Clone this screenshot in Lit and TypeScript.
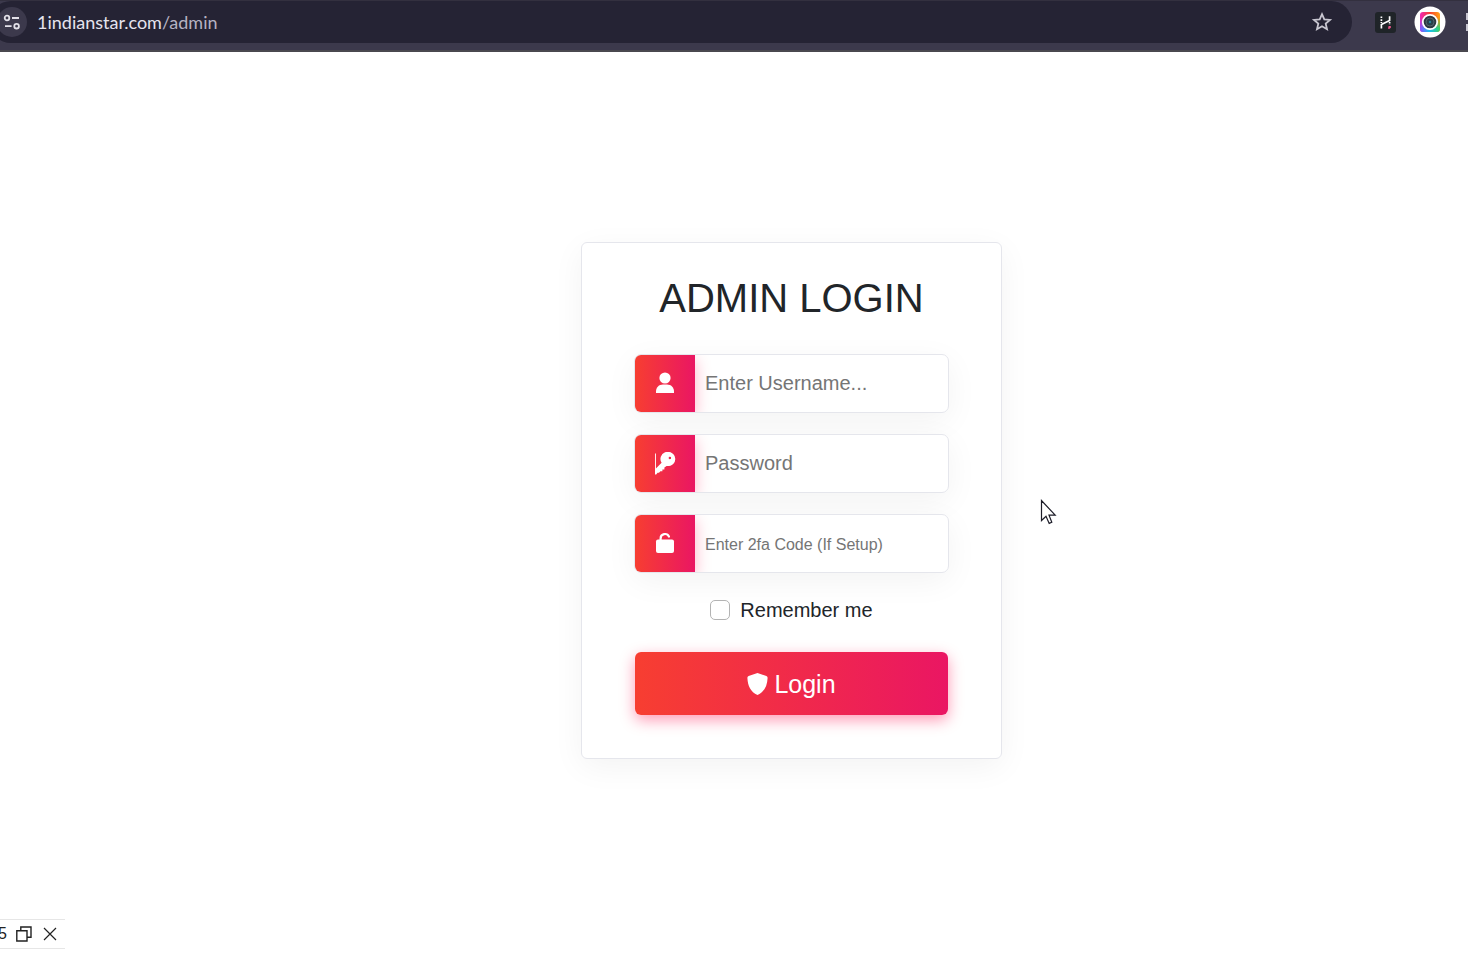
import { LitElement, html, css, svg, TemplateResult } from "lit";
import { customElement, property } from "lit/decorators.js";

const personIcon = svg`
  <circle cx="12" cy="6" r="5.6"></circle>
  <path d="M3 21V19.4C3 15.2 6 12.4 10 12.4H14C18 12.4 21 15.2 21 19.4V21Z"></path>`;

const keyIcon = svg`
  <path d="M2 1.5H2.9V16.6L8.6 10.8A7 7 0 1 1 13.6 13.9L11.4 15.6V17.4H9.4V19.2H7.4L6 20.8H4.6L3.2 22.6H2Z M16.8 4.6A1.4 1.4 0 1 0 16.8 7.4A1.4 1.4 0 1 0 16.8 4.6Z" fill-rule="evenodd"></path>
  <path d="M8.3 7A7 7 0 0 1 22.3 7A7 7 0 0 1 15.3 14L10 13Z M16.8 4.6A1.4 1.4 0 1 0 16.8 7.4A1.4 1.4 0 1 0 16.8 4.6Z" fill-rule="evenodd"></path>`;

const unlockIcon = svg`
  <path d="M7.6 9V6.4A4.4 4.4 0 0 1 16 4.6" fill="none" stroke="currentColor" stroke-width="2.2" stroke-linecap="round"></path>
  <rect x="3" y="7.6" width="18" height="13.4" rx="2"></rect>`;

@customElement("browser-bar")
export class BrowserBar extends LitElement {
  static styles = css`
    :host {
      display: block;
      font-family: Lato, "Open Sans", sans-serif;
    }
    .bar {
      display: flex;
      align-items: center;
      height: 52px;
      box-sizing: border-box;
      padding-bottom: 7px;
      background: #3c394c;
      border-top: 1px solid #33303f;
      border-bottom: 2px solid #4a484f;
      overflow: hidden;
    }
    .address {
      display: flex;
      align-items: center;
      flex: 1;
      height: 42px;
      margin-left: -10px;
      padding-left: 7px;
      padding-right: 18px;
      border-radius: 21px;
      background: #252334;
    }
    button {
      display: flex;
      flex: none;
      align-items: center;
      justify-content: center;
      padding: 0;
      border: 0;
      background: none;
      color: #c8c6d0;
    }
    .site {
      width: 30px;
      height: 30px;
      border-radius: 50%;
      background: #3c394c;
      color: #e3e1e9;
    }
    .url {
      flex: 1;
      margin-left: 10px;
      font-size: 18px;
      line-height: 24px;
      color: #e6e4ee;
      text-decoration: none;
    }
    .path {
      color: #b5b2c2;
    }
    .tools {
      display: flex;
      flex: none;
      align-items: center;
      width: 116px;
      padding-left: 23px;
      box-sizing: border-box;
      gap: 18px;
    }
    svg {
      display: block;
      flex: none;
    }
  `;

  render() {
    return html`
      <header class="bar">
        <div class="address">
          <button class="site" aria-label="Site information">
            <svg width="18" height="16" viewBox="0 0 18 16" fill="none" stroke="currentColor" stroke-width="1.8">
              <circle cx="4" cy="4" r="2.3"></circle>
              <path d="M9 4H16M2 12.2H8.6"></path>
              <circle cx="13.6" cy="12.2" r="2.3"></circle>
            </svg>
          </button>
          <a class="url" href="#">1indianstar.com<span class="path">/admin</span></a>
          <button aria-label="Bookmark this page">
            <svg width="24" height="24" viewBox="0 0 24 24" fill="none" stroke="currentColor" stroke-width="1.8">
              <path d="M12 4.2L14.3 9.4L20 9.9L15.7 13.6L17 19.2L12 16.2L7 19.2L8.3 13.6L4 9.9L9.7 9.4Z"></path>
            </svg>
          </button>
        </div>
        <div class="tools">
          <button aria-label="Extension">
            <svg width="21" height="21" viewBox="0 0 21 21">
              <rect width="21" height="21" rx="3" fill="#1f2428"></rect>
              <g fill="none" stroke="#fff" stroke-width="1.7">
                <path d="M6.4 16.5V12.5L14.6 8.5V4.2"></path>
                <path d="M6.4 4.5V11" stroke-dasharray="1.6 1.2"></path>
                <path d="M14.6 10V13" stroke-dasharray="1.6 1.2"></path>
              </g>
              <path d="M13.6 14H15.8V15.4L14.8 16.8H13Z" fill="#f0568c"></path>
            </svg>
          </button>
          <button aria-label="Camera extension">
            <svg width="32" height="32" viewBox="0 0 32 32">
              <defs>
                <linearGradient id="top" x1="0" x2="1">
                  <stop offset="0" stop-color="#f026b8"></stop>
                  <stop offset="0.5" stop-color="#f8402e"></stop>
                  <stop offset="1" stop-color="#ffa316"></stop>
                </linearGradient>
                <linearGradient id="bottom" x1="0" x2="1">
                  <stop offset="0" stop-color="#8d4dff"></stop>
                  <stop offset="0.45" stop-color="#18bdf2"></stop>
                  <stop offset="1" stop-color="#38d46a"></stop>
                </linearGradient>
                <linearGradient id="fade" x2="0" y2="1">
                  <stop offset="0.3" stop-color="#000"></stop>
                  <stop offset="0.8" stop-color="#fff"></stop>
                </linearGradient>
                <mask id="lower"><rect x="5" y="5" width="22" height="22" fill="url(#fade)"></rect></mask>
              </defs>
              <circle cx="16" cy="16" r="15.5" fill="#fff"></circle>
              <rect x="6" y="6" width="20" height="20" rx="3" fill="url(#top)"></rect>
              <rect x="6" y="6" width="20" height="20" rx="3" fill="url(#bottom)" mask="url(#lower)"></rect>
              <circle cx="16" cy="16" r="7.2" fill="#2d3942" stroke="#fff" stroke-width="1.8"></circle>
              <circle cx="16" cy="16" r="4" fill="#29404b" stroke="#54636c" stroke-width="1"></circle>
              <circle cx="16" cy="16" r="1.2" fill="#2c8095"></circle>
            </svg>
          </button>
          <button aria-label="Extensions">
            <svg width="20" height="20" viewBox="0 0 20 20" fill="none" stroke="currentColor" stroke-width="2">
              <path d="M3 8V2H8M3 12V18H8M12 2H18V8M18 12V18H12"></path>
            </svg>
          </button>
        </div>
      </header>
    `;
  }
}

@customElement("icon-field")
export class IconField extends LitElement {
  @property() label = "";
  @property() type = "text";
  @property({ type: Boolean, reflect: true }) small = false;
  @property({ attribute: false }) icon?: TemplateResult;

  static styles = css`
    :host {
      display: block;
    }
    .field {
      display: flex;
      height: 57px;
      border: 1px solid #e5e6ec;
      border-radius: 7px;
      overflow: hidden;
      background: #fff;
    }
    .wrap {
      border-radius: 7px;
      box-shadow: 0 8px 32px rgba(0, 0, 0, 0.05);
    }
    .badge {
      display: flex;
      flex: none;
      align-items: center;
      justify-content: center;
      width: 60px;
      color: #fff;
      background: linear-gradient(to right, #f73e31, #ea1663);
      box-shadow: 0 5px 15px rgba(255, 0, 70, 0.3);
    }
    svg {
      display: block;
      fill: currentColor;
    }
    input {
      flex: 1;
      min-width: 0;
      padding: 0 10px;
      border: 0;
      outline: 0;
      background: none;
      font-family: "Liberation Sans", Arial, sans-serif;
      font-size: 20px;
      color: #212529;
    }
    input::placeholder {
      color: #757575;
      opacity: 1;
    }
    :host([small]) input {
      padding-top: 2px;
      font-size: 16px;
    }
  `;

  render() {
    return html`
      <div class="wrap">
        <div class="field">
          <label class="badge" for="control" aria-label=${this.label}>
            <svg width="24" height="24" viewBox="0 0 24 24">${this.icon}</svg>
          </label>
          <input id="control" type=${this.type} placeholder=${this.label} />
        </div>
      </div>
    `;
  }
}

@customElement("app-root")
export class AppRoot extends LitElement {
  static styles = css`
    :host {
      display: flex;
      flex-direction: column;
      position: relative;
      min-height: 100vh;
      background: #fff;
      font-family: "Liberation Sans", Arial, sans-serif;
      color: #212529;
    }
    main {
      display: flex;
      flex: 1;
      align-items: center;
      justify-content: center;
      padding: 0 0 20px 115px;
    }
    .card {
      display: flex;
      flex-direction: column;
      box-sizing: border-box;
      width: 100%;
      max-width: 421px;
      padding: 31px 52px 43px;
      border: 1px solid #e5e6ec;
      border-radius: 6px;
      box-shadow: 0 8px 32px rgba(0, 0, 0, 0.05);
    }
    h1 {
      margin: 0 0 32px;
      font-size: 40px;
      line-height: 48px;
      font-weight: 400;
      text-align: center;
    }
    .fields {
      display: grid;
      grid-template-columns: minmax(0, 1fr);
      gap: 21px;
    }
    .remember {
      display: flex;
      align-items: center;
      justify-content: center;
      gap: 10px;
      margin: 22px 0 27px;
      font-size: 20px;
      line-height: 30px;
    }
    .remember input {
      appearance: none;
      box-sizing: border-box;
      width: 20px;
      height: 20px;
      margin: 0;
      border: 1px solid #b3b3b3;
      border-radius: 5px;
      background: #fff;
    }
    .login {
      display: flex;
      align-items: center;
      justify-content: center;
      gap: 6px;
      height: 63px;
      margin: 0 1px;
      padding: 0;
      border: 0;
      border-radius: 6px;
      background: linear-gradient(to right, #f73e31, #ea1663);
      box-shadow: 0 5px 15px rgba(255, 0, 70, 0.4);
      color: #fff;
      font-family: inherit;
      font-size: 25px;
      line-height: 38px;
    }
    .controls {
      position: absolute;
      left: 0;
      bottom: 20px;
      display: flex;
      align-items: center;
      box-sizing: border-box;
      width: 65px;
      height: 30px;
      border: solid #e6e6e6;
      border-width: 1px 0;
      background: #fff;
      font-size: 16px;
      color: #222;
    }
    .count {
      margin-left: -2px;
    }
    .controls button {
      padding: 0;
      border: 0;
      background: none;
      color: #222;
    }
    .restore {
      margin: 0 11px 0 9px;
    }
    svg {
      display: block;
    }
    .cursor {
      position: absolute;
      left: 1040px;
      top: 499px;
    }
  `;

  render() {
    return html`
      <browser-bar></browser-bar>
      <main>
        <form class="card" @submit=${(e: Event) => e.preventDefault()}>
          <h1>ADMIN LOGIN</h1>
          <div class="fields">
            <icon-field label="Enter Username..." .icon=${personIcon}></icon-field>
            <icon-field label="Password" type="password" .icon=${keyIcon}></icon-field>
            <icon-field label="Enter 2fa Code (If Setup)" small .icon=${unlockIcon}></icon-field>
          </div>
          <label class="remember"><input type="checkbox" />Remember me</label>
          <button class="login" type="submit">
            <svg width="21" height="22" viewBox="0 0 21 22" fill="currentColor">
              <path d="M10.5 0L19.4 3.1Q20.7 3.6 20.6 5C20.3 12.6 17.4 19 10.5 22C3.6 19 .7 12.6 .4 5Q.3 3.6 1.6 3.1Z"></path>
            </svg>
            Login
          </button>
        </form>
      </main>
      <div class="controls">
        <span class="count">5</span>
        <button class="restore" aria-label="Restore">
          <svg width="16" height="16" viewBox="0 0 16 16" fill="none" stroke="currentColor" stroke-width="1.4">
            <path d="M.8 4.8H11V15H.8ZM4.8 4.8V1H15V11.2H11"></path>
          </svg>
        </button>
        <button aria-label="Close">
          <svg width="14" height="14" viewBox="0 0 14 14" fill="none" stroke="currentColor" stroke-width="1.2">
            <path d="M1 1L13 13M13 1L1 13"></path>
          </svg>
        </button>
      </div>
      <svg class="cursor" width="18" height="27" viewBox="0 0 18 27">
        <path d="M1.5 1.5V21.5L6 17.2L9.2 24.4L11.8 23.2L9 16.2H15.2Z" fill="#fff" stroke="#1c1c28" stroke-width="1.2"></path>
      </svg>
    `;
  }
}
